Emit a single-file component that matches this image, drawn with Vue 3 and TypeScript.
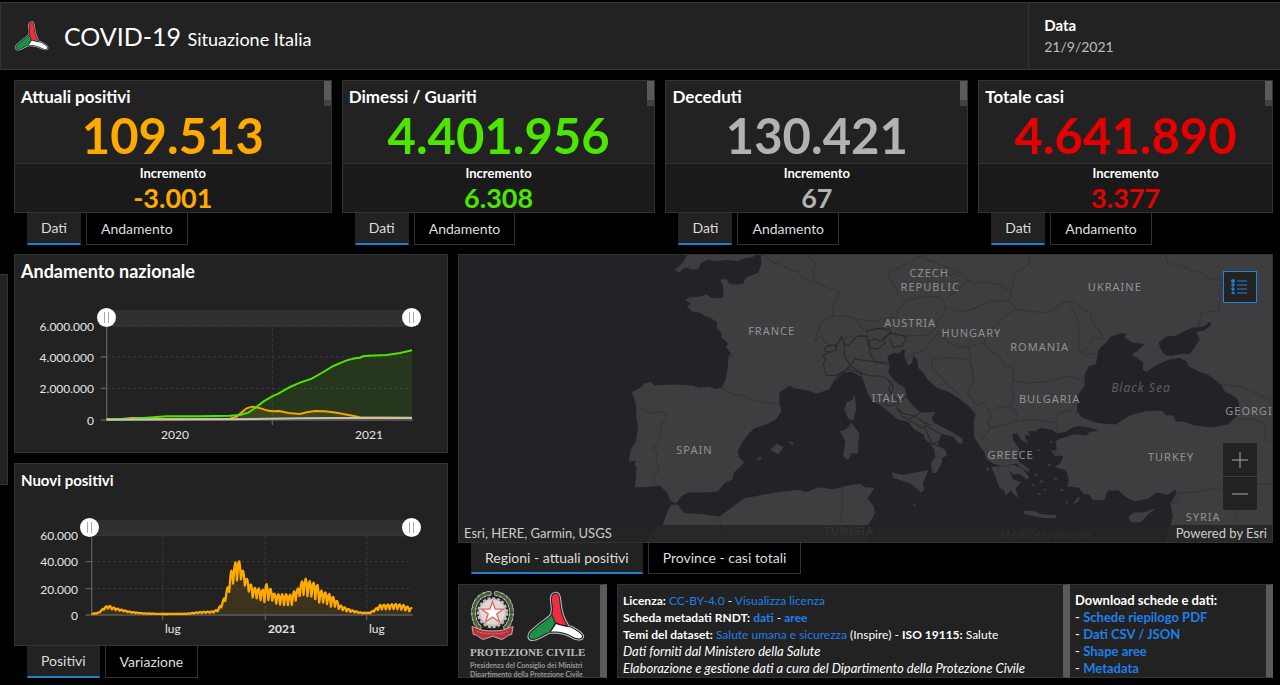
<script setup lang="ts">
import { ref } from 'vue'

interface Indicator {
  id: string
  title: string
  total: string
  delta: string
  tone: string
}

interface MapLabel {
  text: string
  x: number
  y: number
}

const indicators: Indicator[] = [
  { id: 'positivi', title: 'Attuali positivi', total: '109.513', delta: '-3.001', tone: 'orange' },
  { id: 'guariti', title: 'Dimessi / Guariti', total: '4.401.956', delta: '6.308', tone: 'green' },
  { id: 'deceduti', title: 'Deceduti', total: '130.421', delta: '67', tone: 'grey' },
  { id: 'totale', title: 'Totale casi', total: '4.641.890', delta: '3.377', tone: 'red' },
]

const labels: MapLabel[] = [
  { text: 'CZECH', x: 470, y: 22 },
  { text: 'REPUBLIC', x: 471, y: 36 },
  { text: 'UKRAINE', x: 655, y: 36 },
  { text: 'AUSTRIA', x: 451, y: 72 },
  { text: 'FRANCE', x: 313, y: 80 },
  { text: 'HUNGARY', x: 512, y: 82 },
  { text: 'ROMANIA', x: 580, y: 96 },
  { text: 'ITALY', x: 429, y: 146 },
  { text: 'BULGARIA', x: 590, y: 147 },
  { text: 'SPAIN', x: 236, y: 198 },
  { text: 'GREECE', x: 551, y: 203 },
  { text: 'TURKEY', x: 711, y: 205 },
  { text: 'SYRIA', x: 743, y: 265 },
  { text: 'TUNISIA', x: 390, y: 279 },
]

const trendFrom = ref(0)
const trendTo = ref(100)
const dailyFrom = ref(0)
const dailyTo = ref(100)

// The three arms of the emblem, shared by its rim and its coloured faces
const arms = {
  red: 'M300 49C288 50 286 62 289 78C292 92 292 102 289 112L299 137C310 142 322 145 334 146C320 126 313 98 311 72C310 55 307 49 300 49Z',
  green: 'M287 115C279 127 262 135 248 147L225 167C216 176 217 186 225 188C238 190 252 180 264 174L281 165 297 140Z',
  white: 'M301 142C315 148 335 151 346 153C360 160 382 173 381 181C379 190 365 188 350 180C335 171 310 164 285 166Z',
}
const silhouette = `${arms.red} ${arms.green} ${arms.white}`

// Upper and lower bounds of the weekly swing of new cases: x, high, low
const envelope: number[][] = [
  [275, 477, 477], [295, 473, 475], [310, 460, 465], [320, 453, 460], [330, 453, 462], [345, 459, 465],
  [365, 464, 468], [390, 470, 473], [430, 475, 476], [490, 477, 477], [560, 476, 477], [600, 471, 474],
  [640, 469, 473], [655, 462, 468], [670, 435, 450], [685, 390, 420], [692, 352, 395], [700, 335, 385],
  [708, 318, 378], [714, 313, 375], [722, 326, 372], [730, 350, 385], [740, 370, 400], [750, 385, 415],
  [760, 398, 430], [775, 400, 430], [790, 405, 443], [797, 383, 440], [805, 395, 435], [815, 405, 435],
  [825, 418, 445], [845, 418, 450], [860, 418, 450], [875, 420, 450], [885, 405, 440], [895, 400, 425],
  [905, 380, 420], [915, 370, 420], [925, 376, 425], [935, 382, 425], [950, 385, 435], [960, 405, 445],
  [975, 412, 442], [990, 418, 455], [1005, 430, 455], [1020, 450, 464], [1040, 460, 469], [1060, 467, 472],
  [1085, 473, 475], [1110, 473, 475], [1125, 463, 468], [1140, 450, 463], [1160, 449, 463],
  [1190, 447, 462], [1210, 450, 465], [1225, 456, 468], [1236, 460, 470],
]
const week = [0.1, 0, 0.15, 0.5, 1, 0.65, 0.25]

function dailyPath(): string {
  const points: string[] = []
  let seg = 0
  for (let day = 0; day <= 573; day++) {
    const x = 275 + (day * 961) / 573
    while (seg < envelope.length - 2 && x > envelope[seg + 1][0]) seg++
    const [x0, h0, l0] = envelope[seg]
    const [x1, h1, l1] = envelope[seg + 1]
    const t = (x - x0) / (x1 - x0)
    const high = h0 + (h1 - h0) * t
    const low = l0 + (l1 - l0) * t
    points.push(`${x.toFixed(1)},${(high + (low - high) * week[(day + 3) % 7]).toFixed(1)}`)
  }
  return 'M' + points.join(' L')
}

const daily = dailyPath()
const healed =
  'M320,508 L400,506 440,503 500,499 600,499 690,497 720,495 745,488 765,474 790,455 815,440 835,431 870,411 900,398 935,386 965,369 1000,348 1040,331 1065,325 1080,323 1088,319 1105,317 1160,315 1200,309 1236,301'
const positive =
  'M320,508 L365,507 395,504 425,504 470,507 690,506 710,500 725,487 740,475 755,470 775,473 800,481 815,484 838,483 865,489 900,492 920,487 945,483 975,484 1010,488 1050,496 1080,502 1236,503'
const dead = 'M320,509 L700,508 800,506 900,505 1000,504 1236,504'
</script>

<template>
  <div class="dashboard">
    <svg class="defs" aria-hidden="true">
      <symbol id="triskel" viewBox="208 40 182 158">
        <g stroke-linejoin="round">
          <path :d="silhouette" fill="#b5b5b5" stroke="#b5b5b5" stroke-width="13" />
          <path :d="silhouette" fill="#17221c" stroke="#17221c" stroke-width="6" />
        </g>
        <path :d="arms.red" fill="#ef2b43" />
        <path :d="arms.green" fill="#1d9048" />
        <path :d="arms.white" fill="#fff" />
      </symbol>
    </svg>

    <header class="topbar">
      <div class="brand">
        <svg class="brand-logo" role="img" aria-label="Protezione Civile"><use href="#triskel" /></svg>
        <h1>COVID-19 <small>Situazione Italia</small></h1>
      </div>
      <div class="date">
        <strong>Data</strong>
        <span>21/9/2021</span>
      </div>
    </header>

    <section class="indicators">
      <article v-for="item in indicators" :key="item.id" class="indicator">
        <div class="card">
          <div class="card-head">
            <h2>{{ item.title }}</h2>
            <span class="mini-scroll"></span>
          </div>
          <div class="total" :class="item.tone">{{ item.total }}</div>
          <div class="increment">
            <span>Incremento</span>
            <b :class="item.tone">{{ item.delta }}</b>
          </div>
        </div>
        <nav class="tabs">
          <button type="button" class="tab active">Dati</button>
          <button type="button" class="tab">Andamento</button>
        </nav>
      </article>
    </section>

    <main class="lower">
      <div class="drawer"></div>

      <div class="charts">
        <section class="panel trend">
          <h2>Andamento nazionale</h2>
          <div class="chart">
            <svg viewBox="0 0 432 165" role="img" aria-label="Andamento nazionale">
              <g transform="translate(-15 -35) scale(.33333)" fill="none">
                <rect x="320" y="180" width="916" height="51" fill="#303030" />
                <path d="M320 227H1236M320 321H1236M320 415H1236M817 235V510" stroke="#3b3b3b" stroke-width="3" stroke-dasharray="9 7" />
                <path :d="healed + ' V510 H320Z'" fill="#4ce600" fill-opacity=".11" />
                <path :d="positive + ' V510 H320Z'" fill="#ffaa00" fill-opacity=".12" />
                <path d="M320 227V510M302 321H320M302 415H320M302 510H1238M817 510V525" stroke="#5c5c5c" stroke-width="4" />
                <path :d="positive" stroke="#f0a800" stroke-width="6" />
                <path :d="healed" stroke="#4ce600" stroke-width="6" />
                <path :d="dead" stroke="#c4c4bc" stroke-width="6" />
              </g>
              <g class="axis end">
                <text x="79" y="46">6.000.000</text>
                <text x="79" y="77">4.000.000</text>
                <text x="79" y="108">2.000.000</text>
                <text x="79" y="140">0</text>
              </g>
              <g class="axis middle">
                <text x="160" y="154">2020</text>
                <text x="354" y="154">2021</text>
              </g>
            </svg>
            <div class="range range-trend">
              <input v-model="trendFrom" type="range" min="0" max="100" aria-label="Inizio periodo, andamento" />
              <input v-model="trendTo" type="range" min="0" max="100" aria-label="Fine periodo, andamento" />
            </div>
          </div>
        </section>

        <section class="panel news">
          <h3>Nuovi positivi</h3>
          <div class="chart">
            <svg viewBox="0 0 432 148" role="img" aria-label="Nuovi positivi">
              <g transform="translate(-15 -40) scale(.33333)" fill="none">
                <rect x="273" y="194" width="963" height="50" fill="#303030" />
                <path d="M275 241H1236M275 320H1236M275 401H1236M488 244V480M796 244V480M1100 244V480" stroke="#3b3b3b" stroke-width="3" stroke-dasharray="9 7" />
                <path :d="daily + ' V479 H275Z'" fill="#ffaa00" fill-opacity=".12" />
                <path d="M275 241V480M257 320H275M257 401H275M257 480H1238M488 480V494M796 480V494M1100 480V494" stroke="#5c5c5c" stroke-width="4" />
                <path :d="daily" stroke="#ffaa00" stroke-width="7" stroke-linejoin="round" />
              </g>
              <g class="axis end">
                <text x="63" y="45">60.000</text>
                <text x="63" y="71">40.000</text>
                <text x="63" y="99">20.000</text>
                <text x="63" y="125">0</text>
              </g>
              <g class="axis">
                <text x="150" y="138">lug</text>
                <text x="253" y="138" class="strong">2021</text>
                <text x="354" y="138">lug</text>
              </g>
            </svg>
            <div class="range range-news">
              <input v-model="dailyFrom" type="range" min="0" max="100" aria-label="Inizio periodo, nuovi positivi" />
              <input v-model="dailyTo" type="range" min="0" max="100" aria-label="Fine periodo, nuovi positivi" />
            </div>
          </div>
        </section>
        <nav class="tabs">
          <button type="button" class="tab active">Positivi</button>
          <button type="button" class="tab">Variazione</button>
        </nav>
      </div>

      <div class="side">
        <section class="map">
          <svg class="map-canvas" viewBox="0 0 813 286" preserveAspectRatio="xMidYMid slice" role="img" aria-label="Mappa">
            <g transform="translate(171 -6) scale(.33333)">
              <g class="land">
                <path d="M175 15L158 44 136 62 150 70 168 55 190 62 207 58 215 42 235 32 262 36 290 33 325 36 345 28 370 24 378 15Z" />
                <path d="M394 15L395 45 386 70 350 86 340 104 318 107 300 104 291 90 272 92 281 112 281 145 247 147 232 135 212 142 182 144 167 152 185 164 172 172 190 188 210 190 222 198 244 206 263 220 262 238 276 250 276 265 296 282 290 292 298 305 312 325 298 314 295 350 288 392 276 415 258 418 240 412 208 415 190 408 130 405 75 408 65 398 45 402 38 412 8 428 14 445 20 465 22 510 27 530 20 575 5 600 -2 635 20 632 16 645 22 655 20 690 16 712 50 712 92 708 115 730 122 750 140 762 155 740 175 728 225 728 265 725 285 700 310 688 312 670 345 638 328 622 325 605 340 575 360 550 375 535 410 525 440 508 455 485 450 465 448 430 478 410 500 418 530 422 560 432 598 420 610 400 640 370 665 366 690 380 700 395 712 430 726 455 748 465 780 490 800 508 835 518 852 540 880 555 885 570 900 580 912 600 916 622 902 640 906 670 918 670 935 640 936 624 950 618 945 600 925 590 925 575 938 554 970 562 985 582 998 580 995 566 960 545 912 520 905 505 915 488 870 488 845 465 830 445 824 415 800 400 785 385 775 370 778 350 772 322 790 310 808 313 818 300 826 305 822 318 834 348 846 340 850 318 862 332 864 355 885 378 893 392 920 415 960 430 990 450 1015 470 1035 493 1030 525 1032 563 1048 590 1060 604 1068 628 1085 640 1115 650 1150 645 1178 658 1197 684 1186 688 1168 672 1150 675 1135 662 1150 690 1172 698 1155 715 1163 745 1140 722 1125 738 1120 720 1108 715 1095 680 1082 652 1100 650 1125 648 1165 640 1160 620 1168 600 1150 575 1145 555 1160 550 1172 572 1192 580 1182 556 1200 560 1192 545 1215 545 1230 535 1262 540 1280 552 1315 545 1298 560 1275 575 1278 598 1268 618 1298 618 1290 640 1272 652 1306 662 1314 690 1310 710 1345 714 1358 732 1376 735 1386 750 1420 752 1430 722 1462 722 1490 745 1512 755 1555 745 1575 728 1612 735 1632 718 1636 730 1618 760 1625 800 1612 850 1600 880 1940 880 1940 15Z" />
                <path d="M45 885L60 860 100 825 112 790 125 765 145 765 165 790 215 792 270 800 300 778 345 745 400 735 455 725 510 720 528 727 565 712 610 718 650 708 690 702 705 712 734 714 712 745 730 768 735 790 715 825 692 838 720 870 740 890Z" />
                <path d="M674 435L679 480 670 512 655 508 643 480 650 458 668 450Z" />
                <path d="M630 545L648 540 665 520 688 550 683 612 665 610 655 630 640 620 646 575Z" />
                <path d="M785 668L820 675 895 660 878 700 882 720 872 728 840 700 790 685Z" />
                <path d="M422 600L440 582 462 592 446 614ZM472 576L490 576 491 586 480 580ZM380 628L392 621 397 626 386 633ZM848 762L858 765 854 769Z" />
                <path d="M1180 782L1210 784 1230 792 1278 796 1276 804 1235 804 1180 792Z" />
                <path d="M1492 802L1508 788 1535 788 1576 774 1550 795 1530 818 1500 816Z" />
                <path d="M1328 765L1340 742 1348 742 1342 756ZM1150 630L1172 640 1200 662 1192 666 1165 648ZM1210 670L1222 676 1216 682ZM1228 690L1240 696 1232 700ZM1262 600L1280 605 1266 612ZM1250 640L1262 645 1256 650ZM1240 715L1248 722 1238 722ZM1268 682L1284 688 1272 690ZM1205 700L1214 708 1206 710ZM1222 728L1232 732 1224 736ZM1288 715L1304 722 1292 724ZM1308 745L1312 762 1306 768ZM1258 572L1270 578 1260 580ZM1218 598L1232 602 1222 606ZM1070 650L1078 660 1068 662ZM1200 620L1210 624 1204 628Z" />
              </g>
              <g class="sea">
                <path d="M1402 305L1410 293 1422 284 1440 262 1475 251 1488 256 1480 264 1505 280 1540 284 1532 294 1502 318 1520 325 1537 340 1536 360 1546 368 1572 350 1610 332 1645 325 1665 335 1672 350 1705 368 1730 375 1770 405 1780 425 1815 445 1824 462 1822 495 1790 525 1740 534 1690 528 1655 515 1636 517 1626 498 1606 497 1592 483 1540 486 1498 497 1455 525 1400 520 1352 503 1338 482 1341 460 1335 445 1362 410 1360 378 1375 350 1395 345 1400 320Z" />
                <path d="M1583 280L1605 262 1632 260 1680 236 1718 232 1735 218 1742 225 1720 242 1695 250 1706 270 1692 292 1675 315 1652 313 1620 320 1603 318 1590 302Z" />
                <path d="M1300 550L1328 532 1345 530 1370 533 1405 542 1375 548 1368 558 1330 554 1305 562 1285 568Z" />
              </g>
              <g class="border">
                <path d="M22 480L45 476 62 492 95 485 112 495 112 508 94 525 93 560 83 585 70 595 83 610 80 640 90 660 72 685 75 708" />
                <path d="M276 415L310 435 350 440 370 450 410 460 450 462" />
                <path d="M400 18L435 42 450 45 480 62 505 68 520 88 560 100 600 118 630 126 612 160 608 200" />
                <path d="M530 15L545 30 562 45 548 65 555 90" />
                <path d="M608 200L580 212 568 235 555 275 575 262 585 282 612 288 640 268 660 258 670 268 690 258 710 262 712 245 690 232 680 210 650 200Z" />
                <path d="M690 210L730 215 780 205 802 205 800 182 830 155 870 145 900 140 930 145 945 165 942 195 925 210 920 235 890 258 828 260 780 250 755 235 712 245" />
                <path d="M830 155L808 140 792 110 772 72 820 50 858 28 872 18 890 30 925 45 960 58 1000 75 1015 95 980 125 950 145" />
                <path d="M930 70L980 78 1030 105 1060 98 1110 108 1125 120 1145 122 1135 155 1100 155 1068 160 1025 180 985 190 945 170" />
                <path d="M1198 18L1195 45 1150 78 1145 120 1135 155 1158 180 1125 200 1085 240 1060 280 1015 292 980 292 955 280 920 245" />
                <path d="M1158 180L1230 190 1260 188 1292 162 1310 158 1335 195 1345 235 1345 300 1360 318 1400 310" />
                <path d="M1292 160L1325 155 1360 182 1380 190 1385 220 1410 248 1420 270 1390 262 1375 290 1355 310" />
                <path d="M1060 280L1085 310 1110 325 1120 350 1150 358 1148 380 1155 395 1190 400 1250 398 1310 380 1350 392 1358 405" />
                <path d="M830 330L850 310 880 305 905 275 925 250M905 330L960 325 1015 330 1022 355 1030 400 1010 430 1040 468 1060 460 1085 500 1070 520 1080 535 1055 570" />
                <path d="M905 330L905 355 930 380 950 405 985 432M1030 380L1015 295M1070 490L1110 470 1145 475 1160 490 1155 515 1120 525 1085 535 1070 515" />
                <path d="M1148 385L1142 415 1150 440 1140 470M1155 515L1210 510 1275 520 1282 492 1320 482 1342 490M1275 520L1280 545" />
                <path d="M1602 18L1610 45 1645 45 1680 65 1705 70 1740 90 1780 95 1762 125 1768 150 1760 185 1710 190 1700 235" />
                <path d="M1770 405L1830 412 1870 430 1915 450M1820 510L1865 508 1900 520 1902 570 1925 578M1640 728L1690 728 1740 718 1790 720 1850 705 1925 702M1640 728L1640 750 1622 762M1815 780L1810 820" />
                <path d="M260 800L275 820 278 870M636 712L638 770 632 820" />
              </g>
              <g class="region">
                <path d="M582 300L592 290 618 288 620 302 602 308 585 305ZM618 295L635 262 642 280 645 325 662 348 645 362 620 378 590 378 580 345 588 328 578 318 600 308" />
                <path d="M642 280L655 290 680 262 710 260 716 290 722 318 740 338 772 338 M660 350L675 330 720 335 772 345" />
                <path d="M708 250L718 242 745 238 780 240 782 252 760 268 765 282 740 300 722 295 715 275 735 268 750 275 780 252 828 262 825 272 815 290 790 295 780 270" />
                <path d="M610 395L630 375 655 358 690 370 720 380 755 380 775 392M662 350L690 368 700 395M775 392L790 410 785 430 770 440 765 465 780 470 800 462M785 395L775 420 790 440 808 455 800 475 820 492 848 498M830 440L808 455M800 478L815 500 835 510 862 495 872 488M848 498L870 510 880 520M835 512L852 520 875 535 890 528 908 540 935 555 928 575 905 582 895 560 885 535M880 518L905 528M902 580L925 590" />
              </g>
            </g>
            <g class="country">
              <text v-for="label in labels" :key="label.text" :x="label.x" :y="label.y">{{ label.text }}</text>
            </g>
            <g class="water">
              <text x="681" y="137">Black Sea</text>
              <text x="586" y="283">Mediterranean</text>
            </g>
            <text class="country clipped" x="765" y="159">GEORGI</text>
          </svg>
          <button type="button" class="legend" aria-label="Legenda">
            <svg viewBox="0 0 18 18" width="18" height="18">
              <path d="M6 3h10M6 7h10M6 11h10M6 15h10" stroke="#2180d8" stroke-width="1" fill="none" />
              <g fill="#2180d8">
                <circle cx="2" cy="3" r="2" />
                <circle cx="2" cy="7" r="1.7" />
                <circle cx="2" cy="11" r="1.7" />
                <path d="M2 13L4 16H0Z" />
              </g>
            </svg>
          </button>
          <div class="zoom">
            <button type="button" aria-label="Ingrandisci">
              <svg viewBox="0 0 16 16" width="16" height="16"><path d="M8 0V16M0 8H16" /></svg>
            </button>
            <button type="button" aria-label="Riduci">
              <svg viewBox="0 0 16 16" width="16" height="16"><path d="M0 8H16" /></svg>
            </button>
          </div>
          <div class="credits">
            <span>Esri, HERE, Garmin, USGS</span>
            <span>Powered by Esri</span>
          </div>
        </section>
        <nav class="tabs">
          <button type="button" class="tab active">Regioni - attuali positivi</button>
          <button type="button" class="tab">Province - casi totali</button>
        </nav>

        <div class="footer">
          <section class="box agency">
            <div class="marks">
              <svg class="emblem" viewBox="40 44 136 152" role="img" aria-label="Repubblica Italiana">
                <circle cx="108" cy="110" r="42" fill="#cfc8c4" stroke="#c2bab6" stroke-width="10" stroke-dasharray="9 5" />
                <circle cx="108" cy="108" r="37" fill="#e2d9d7" />
                <g fill="none" stroke-linecap="round">
                  <path d="M98 52C64 56 50 84 51 112C52 132 58 144 68 154" stroke="#c3c5b4" stroke-width="15" stroke-dasharray="4 10" />
                  <path d="M98 52C64 56 50 84 51 112C52 132 58 144 68 154" stroke="#48603a" stroke-width="10" stroke-dasharray="9 9" />
                  <path d="M120 52C152 58 166 84 165 112C164 132 158 144 148 154" stroke="#c3c5b4" stroke-width="15" stroke-dasharray="4 10" />
                  <path d="M120 52C152 58 166 84 165 112C164 132 158 144 148 154" stroke="#48603a" stroke-width="10" stroke-dasharray="9 9" />
                </g>
                <path d="M108 76L116 99 141 99 121 114 129 138 108 123 87 138 95 114 75 99 100 99Z" fill="#fff" stroke="#d86a66" stroke-width="4" />
                <path d="M46 152C66 156 70 166 108 165C146 166 150 156 170 152L166 176C152 176 150 186 136 191L108 181 80 191C66 186 64 176 50 176Z" fill="#b5333b" stroke="#d8a5a5" stroke-width="3" />
                <path d="M62 167C82 176 134 176 154 167" fill="none" stroke="#d98a8a" stroke-width="3" stroke-dasharray="4 4" />
              </svg>
              <svg class="civile" role="img" aria-label="Protezione Civile"><use href="#triskel" /></svg>
            </div>
            <p class="agency-name">PROTEZIONE CIVILE</p>
            <p class="agency-dept">Presidenza del Consiglio dei Ministri</p>
            <p class="agency-dept">Dipartimento della Protezione Civile</p>
          </section>

          <div class="info">
            <section class="box licence">
              <p><b>Licenza:</b> <a href="#licenza">CC-BY-4.0</a> - <a href="#visualizza">Visualizza licenza</a></p>
              <p><b>Scheda metadati RNDT: <a href="#dati">dati</a></b> - <b><a href="#aree">aree</a></b></p>
              <p><b>Temi del dataset:</b> <a href="#temi">Salute umana e sicurezza</a> (Inspire) - <b>ISO 19115:</b> Salute</p>
              <p><i>Dati forniti dal Ministero della Salute</i></p>
              <p><i>Elaborazione e gestione dati a cura del Dipartimento della Protezione Civile</i></p>
            </section>
            <section class="box downloads">
              <p><b>Download schede e dati:</b></p>
              <p>- <b><a href="#pdf">Schede riepilogo PDF</a></b></p>
              <p>- <b><a href="#csv">Dati CSV / JSON</a></b></p>
              <p>- <b><a href="#shape">Shape aree</a></b></p>
              <p>- <b><a href="#metadata">Metadata</a></b></p>
            </section>
          </div>
        </div>
      </div>
    </main>
  </div>
</template>

<style>
body {
  margin: 0;
  background: #000;
}
</style>

<style scoped>
* {
  box-sizing: border-box;
}

.dashboard {
  display: flex;
  flex-direction: column;
  min-height: 100vh;
  padding-top: 2px;
  background: #000;
  color: #fff;
  font-family: Lato, "Liberation Sans", sans-serif;
}

.defs {
  position: absolute;
  width: 0;
  height: 0;
}

h1,
h2,
h3,
p {
  margin: 0;
}

button {
  margin: 0;
  font: inherit;
  color: inherit;
  cursor: pointer;
}

.topbar {
  display: grid;
  grid-template-columns: 1028fr 252fr;
  height: 68px;
  border: 1px solid #333;
  border-right: 0;
  background: #222;
}

.brand {
  display: flex;
  align-items: center;
  gap: 15px;
  padding-left: 13px;
}

.brand-logo {
  width: 35px;
  height: 32px;
}

h1 {
  font-size: 25px;
  font-weight: 400;
}

h1 small {
  font-size: 18px;
}

.date {
  display: flex;
  flex-direction: column;
  gap: 2px;
  padding: 12px 15px 0;
  border-left: 1px solid #333;
  font-size: 15px;
  line-height: 20px;
}

.date span {
  color: #bdbdbd;
  font-size: 14px;
}

.indicators {
  display: grid;
  grid-template-columns: 318fr 314fr 303fr 295fr;
  gap: 10px;
  padding: 10px 7px 0 14px;
}

.card {
  border: 1px solid #333;
  background: #222;
}

.card-head {
  display: flex;
  justify-content: space-between;
  height: 26px;
  padding-left: 6px;
}

h2 {
  padding-top: 6px;
  font-size: 17px;
  line-height: 20px;
  font-weight: 700;
}

.mini-scroll {
  width: 7px;
  height: 25px;
  border-bottom: 6px solid #424242;
  background: #5a5a5a;
}

.total {
  height: 56px;
  font-size: 49px;
  line-height: 56px;
  font-weight: 700;
  text-align: center;
}

.increment {
  display: flex;
  flex-direction: column;
  align-items: center;
  height: 49px;
  border-top: 1px solid #333;
  background: #1a1a1a;
  font-size: 13px;
  line-height: 18px;
}

.increment span {
  font-weight: 700;
}

.increment b {
  font-size: 27px;
  line-height: 32px;
}

.orange {
  color: #ffaa00;
}

.green {
  color: #4ce600;
}

.grey {
  color: #b2b2b2;
}

.red {
  color: #e60000;
}

.tabs {
  display: flex;
  gap: 5px;
  padding-left: 13px;
}

.tab {
  height: 32px;
  padding: 0 14px;
  border: 1px solid #333;
  border-top: 0;
  background: #000;
  color: #ddd;
  font-size: 14px;
  line-height: 28px;
}

.tab.active {
  padding: 0 13px;
  border-color: #222;
  border-bottom: 2px solid #1f7fd6;
  background: #222;
}

.lower {
  display: flex;
  flex: 1;
  padding: 9px 7px 7px 0;
}

.drawer {
  width: 8px;
  height: 211px;
  margin: 20px 6px 0 0;
  border: 1px solid #333;
  border-left: 0;
  background: #222;
}

.charts {
  display: flex;
  flex-direction: column;
  flex: 434;
  margin-right: 10px;
}

.side {
  display: flex;
  flex-direction: column;
  flex: 815;
  min-width: 0;
}

.panel {
  border: 1px solid #333;
  background: #222;
}

.trend {
  margin-bottom: 10px;
  padding-bottom: 2px;
}

.news {
  padding-bottom: 2px;
}

.panel h2,
.panel h3 {
  height: 30px;
  padding: 6px 6px 0;
  font-size: 18px;
  line-height: 20px;
}

.panel h3 {
  height: 31px;
  font-size: 15px;
}

.chart {
  position: relative;
}

.chart svg {
  display: block;
  width: 100%;
}

.axis text {
  fill: #e6e6e6;
  font-size: 12px;
}

.axis.end text {
  text-anchor: end;
}

.axis.middle text {
  text-anchor: middle;
}

.axis .strong {
  font-weight: 700;
}

.range {
  position: absolute;
  top: 23px;
  right: 6%;
  height: 19px;
}

.range-trend {
  left: 19%;
}

.range-news {
  left: 15%;
}

.range input {
  position: absolute;
  inset: 0;
  width: 100%;
  height: 19px;
  margin: 0;
  appearance: none;
  background: transparent;
  pointer-events: none;
}

.range input::-webkit-slider-thumb {
  width: 19px;
  height: 19px;
  border: 0;
  border-radius: 50%;
  appearance: none;
  background: linear-gradient(90deg, #fff 7px, #aaa 7px 8px, #fff 8px 11px, #aaa 11px 12px, #fff 12px) center / 19px 11px no-repeat #fff;
  pointer-events: auto;
}

.map {
  position: relative;
  height: 289px;
  overflow: hidden;
  border: 1px solid #333;
  background: #222327;
}

.map-canvas {
  display: block;
  width: 100%;
  height: 100%;
}

.land {
  fill: #3e3e40;
}

.sea {
  fill: #222327;
}

.border {
  fill: none;
  stroke: #343437;
  stroke-width: 3;
  stroke-linejoin: round;
}

.region {
  fill: none;
  stroke: #282829;
  stroke-width: 3;
  stroke-linejoin: round;
}

.country {
  font-family: "Noto Sans", sans-serif;
  font-size: 11px;
  letter-spacing: 1px;
  text-anchor: middle;
  fill: #929294;
}

.clipped {
  text-anchor: start;
}

.water {
  font-family: "Noto Sans", sans-serif;
  font-size: 12px;
  font-style: italic;
  letter-spacing: 1px;
  text-anchor: middle;
  fill: #5d5e61;
}

.legend {
  position: absolute;
  top: 16px;
  right: 15px;
  display: grid;
  place-items: center;
  width: 34px;
  height: 32px;
  padding: 0;
  border: 1px solid #2180d8;
  background: #222;
}

.zoom {
  position: absolute;
  right: 15px;
  bottom: 32px;
  display: grid;
  gap: 1px;
}

.zoom button {
  display: grid;
  place-items: center;
  width: 34px;
  height: 33px;
  padding: 0;
  border: 0;
  background: #222;
}

.zoom path {
  stroke: #aaa;
  stroke-width: 1;
}

.credits {
  position: absolute;
  right: 0;
  bottom: 0;
  left: 0;
  display: flex;
  justify-content: space-between;
  height: 17px;
  padding: 0 5px;
  background: rgba(36, 36, 36, 0.85);
  color: #ccc;
  font-size: 13px;
  line-height: 16px;
}

.side .tabs .tab {
  height: 31px;
}

.footer {
  display: flex;
  gap: 10px;
  margin-top: 10px;
}

.box {
  height: 94px;
  overflow: hidden;
  border: 1px solid #333;
  border-right: 7px solid #5a5a5a;
  background: #222;
}

.agency {
  width: 149px;
  padding: 4px 15px 0 11px;
}

.marks {
  display: flex;
  justify-content: space-between;
  align-items: center;
  height: 54px;
}

.emblem {
  width: 45px;
  height: 52px;
}

.civile {
  width: 59px;
  height: 53px;
}

.agency-name {
  color: #bbb;
  font: 700 11px/18px "Liberation Serif", serif;
  white-space: nowrap;
}

.agency-dept {
  color: #999;
  font: 700 7px/9px Lato, "Liberation Sans", sans-serif;
  white-space: nowrap;
}

.info {
  display: grid;
  flex: 1;
  grid-template-columns: 453fr 203fr;
}

.licence,
.downloads {
  padding: 7px 5px 0;
  font-size: 12px;
  line-height: 17px;
  white-space: nowrap;
}

.licence i {
  font-size: 13px;
}

.downloads {
  border-left: 0;
  font-size: 13px;
}

a {
  color: #1f7fe8;
  text-decoration: none;
}
</style>
